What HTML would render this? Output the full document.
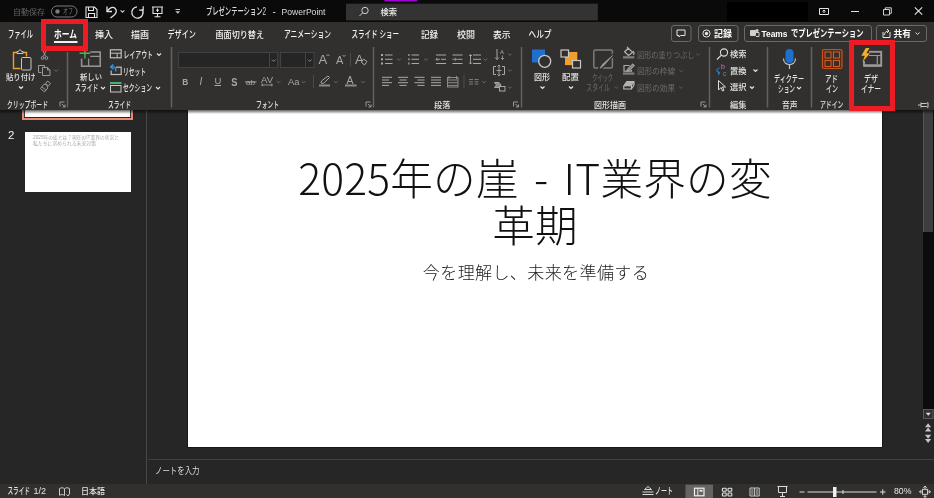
<!DOCTYPE html>
<html lang="ja"><head><meta charset="utf-8"><title>PowerPoint</title>
<style>
html,body{margin:0;padding:0;background:#262626;overflow:hidden}
body{width:934px;height:498px;position:relative;font-family:"Liberation Sans","Noto Sans CJK JP",sans-serif;}
.abs{position:absolute}
#titlebar{left:0;top:0;width:934px;height:23px;background:#0a0a0a}
#ribbon{left:0;top:22.3px;width:934px;height:87.8px;background:#31302e}
#shadow{left:0;top:110px;width:934px;height:3.5px;background:linear-gradient(rgba(0,0,0,.6),rgba(0,0,0,0))}
#work{left:0;top:110px;width:934px;height:374px;background:#262626}
#vdiv{left:146px;top:110px;width:1px;height:374px;background:#484848}
#hdiv{left:148px;top:458.8px;width:786px;height:1.3px;background:#404040}
#slide{left:188.3px;top:110px;width:694.2px;height:336.8px;background:#fff;box-shadow:0 0 0 0.9px #181818}
#thumb1{left:22px;top:100px;width:107px;height:16px;background:#fff;border:2px solid #ea8a72;box-shadow:inset 0 0 0 0.9px #262626}
#thumb2{left:24.6px;top:131.6px;width:106.4px;height:60.2px;background:#fff}
#status{left:0;top:484.4px;width:934px;height:14px;background:#31302e}
#track{left:922.5px;top:110px;width:11px;height:299px;background:#0c0c0c}
#sthumb{left:922.5px;top:110px;width:10px;height:122px;background:#3e3e3e;border-left:1px solid #555;box-sizing:border-box}
#title{will-change:transform;left:188px;top:153.3px;word-spacing:5.5px;width:694px;text-align:center;font-family:"Noto Sans CJK JP","Liberation Sans",sans-serif;font-size:42.67px;line-height:47.4px;font-weight:300;color:#111;white-space:nowrap;letter-spacing:0.2px}
#sub{will-change:transform;left:188.5px;top:258.6px;letter-spacing:0.35px;width:694px;text-align:center;font-family:"Noto Sans CJK JP","Liberation Sans",sans-serif;font-size:17.07px;line-height:26px;font-weight:300;color:#222;white-space:nowrap}
svg{position:absolute;left:0;top:0;will-change:transform}
svg text{font-family:"Liberation Sans","Noto Sans CJK JP",sans-serif;white-space:pre}
</style></head><body>
<div class="abs" id="work"></div>
<div class="abs" id="vdiv"></div>
<div class="abs" id="hdiv"></div>
<div class="abs" id="track"></div>
<div class="abs" id="sthumb"></div>
<div class="abs" id="thumb1"></div>
<div class="abs" id="thumb2"></div>
<div class="abs" id="slide"></div>
<div class="abs" id="title">2025年の崖 - IT業界の変<br>革期</div>
<div class="abs" id="sub">今を理解し、未来を準備する</div>
<div class="abs" id="shadow"></div>
<div class="abs" id="titlebar"></div>
<div class="abs" id="ribbon"></div>
<div class="abs" id="status"></div>
<svg width="934" height="498" viewBox="0 0 934 498">
<text x="13" y="14.76" font-size="8.4" fill="#646464" font-weight="400" textLength="32" lengthAdjust="spacingAndGlyphs">自動保存</text>
<rect x="51.5" y="6" width="25.5" height="11" fill="none" stroke="#7c7c7c" stroke-width="1" rx="5.5"/>
<circle cx="57.5" cy="11.5" r="2.2" fill="#7c7c7c"/>
<text x="63" y="14.43" font-size="7.41" fill="#7c7c7c" font-weight="400" textLength="10" lengthAdjust="spacingAndGlyphs">オフ</text>
<path d="M86 7H94.5L97 9.5V17.5H86ZM88.5 7V10.5H93.5V7M88.5 17.5V13.5H94.5V17.5" stroke="#e4e4e4" stroke-width="1.1" fill="none"/>
<path d="M107 6.5V11.5H112" stroke="#e4e4e4" stroke-width="1.3" fill="none"/>
<path d="M107.3 11.2C109.5 7.5 113 6.5 115 8.3C117.3 10.5 116.3 13.5 114 15.3L110.5 18" stroke="#e4e4e4" stroke-width="1.3" fill="none"/>
<path d="M120.6 10.350000000000001L122.5 12.25L124.4 10.350000000000001" stroke="#c8c8c8" stroke-width="1.2" fill="none"/>
<path d="M142 9.3A5.6 5.6 0 1 1 137 6.9" stroke="#e4e4e4" stroke-width="1.3" fill="none"/>
<path d="M143.2 6.2V10.2H139.2" stroke="#e4e4e4" stroke-width="1.2" fill="none"/>
<path d="M152 7H163M153 7V13.5H162V7M157.5 13.5V16.5M154.5 16.8H160.5" stroke="#e4e4e4" stroke-width="1.1" fill="none"/>
<path d="M157.5 8.5V12M156 10.2H159" stroke="#e4e4e4" stroke-width="1" fill="none"/>
<path d="M175.5 9.5H180" stroke="#c8c8c8" stroke-width="1" fill="none"/>
<path d="M175.3 11.2H180.2L177.75 13.8Z" stroke="none" stroke-width="1" fill="#c8c8c8"/>
<text x="206" y="15.22" font-size="10.03" fill="#dcdcdc" font-weight="500" textLength="60" lengthAdjust="spacingAndGlyphs">プレゼンテーション2</text>
<text x="272.4" y="15.2" font-size="10" fill="#dcdcdc">-</text>
<text x="281.5" y="15.23" font-size="9.8" fill="#dcdcdc" font-weight="400" textLength="44" lengthAdjust="spacingAndGlyphs">PowerPoint</text>
<rect x="346" y="3.7" width="251.8" height="16.7" fill="#333333"/>
<circle cx="365" cy="10.5" r="3.2" fill="none" stroke="#d0d0d0" stroke-width="1"/>
<line x1="362.7" y1="12.8" x2="359.5" y2="16" stroke="#d0d0d0" stroke-width="1"/>
<text x="380.5" y="15.26" font-size="8.4" fill="#f0f0f0" font-weight="500" textLength="16.5" lengthAdjust="spacingAndGlyphs">検索</text>
<rect x="384.4" y="0" width="33" height="1.3" fill="#a800d8"/>
<rect x="727" y="2" width="81" height="19.5" fill="#000"/>
<path d="M819.5 8.5H828.5V14.5H819.5ZM824 10V13M822.5 11.5L824 10L825.5 11.5" stroke="#e4e4e4" stroke-width="1" fill="none"/>
<line x1="851" y1="11.5" x2="859" y2="11.5" stroke="#e4e4e4" stroke-width="1"/>
<path d="M883.5 9.5H889.5V15H883.5ZM885.3 9.5V7.8H891.3V13.3H889.5" stroke="#d0d0d0" stroke-width="1" fill="none"/>
<path d="M914.8 7.3L922.2 14.7M922.2 7.3L914.8 14.7" stroke="#e4e4e4" stroke-width="1.1" fill="none"/>
<text x="8" y="38.14" font-size="9.8" fill="#f4f4f4" font-weight="500" textLength="25" lengthAdjust="spacingAndGlyphs">ファイル</text>
<text x="95" y="37.92" font-size="8.6" fill="#f4f4f4" font-weight="500" textLength="18" lengthAdjust="spacingAndGlyphs">挿入</text>
<text x="131" y="37.92" font-size="8.6" fill="#f4f4f4" font-weight="500" textLength="18" lengthAdjust="spacingAndGlyphs">描画</text>
<text x="167.5" y="38.14" font-size="9.8" fill="#f4f4f4" font-weight="500" textLength="28.5" lengthAdjust="spacingAndGlyphs">デザイン</text>
<text x="215.5" y="37.92" font-size="8.6" fill="#f4f4f4" font-weight="500" textLength="48.5" lengthAdjust="spacingAndGlyphs">画面切り替え</text>
<text x="284" y="38.14" font-size="9.8" fill="#f4f4f4" font-weight="500" textLength="47" lengthAdjust="spacingAndGlyphs">アニメーション</text>
<text x="351.5" y="38.14" font-size="9.8" fill="#f4f4f4" font-weight="500" textLength="47.5" lengthAdjust="spacingAndGlyphs">スライド ショー</text>
<text x="421" y="37.92" font-size="8.6" fill="#f4f4f4" font-weight="500" textLength="17" lengthAdjust="spacingAndGlyphs">記録</text>
<text x="457" y="37.92" font-size="8.6" fill="#f4f4f4" font-weight="500" textLength="18" lengthAdjust="spacingAndGlyphs">校閲</text>
<text x="493" y="37.92" font-size="8.6" fill="#f4f4f4" font-weight="500" textLength="17.5" lengthAdjust="spacingAndGlyphs">表示</text>
<text x="528.5" y="38.14" font-size="9.8" fill="#f4f4f4" font-weight="500" textLength="23" lengthAdjust="spacingAndGlyphs">ヘルプ</text>
<text x="54" y="38.14" font-size="9.8" fill="#ffffff" font-weight="700" textLength="23" lengthAdjust="spacingAndGlyphs">ホーム</text>
<rect x="54" y="41" width="23.5" height="2" fill="#f0f0f0"/>
<rect x="671.5" y="25.5" width="19.5" height="16" fill="#31302e" stroke="#6a6a6a" stroke-width="1" rx="2.5"/>
<rect x="698.5" y="25.5" width="39.5" height="16" fill="#31302e" stroke="#6a6a6a" stroke-width="1" rx="2.5"/>
<rect x="744.5" y="25.5" width="127" height="16" fill="#31302e" stroke="#6a6a6a" stroke-width="1" rx="2.5"/>
<rect x="876.5" y="25.5" width="50" height="16" fill="#31302e" stroke="#6a6a6a" stroke-width="1" rx="2.5"/>
<path d="M677 30H685V35.5H680.5L679 37V35.5H677Z" stroke="#e4e4e4" stroke-width="1" fill="none"/>
<circle cx="706.5" cy="33.5" r="3.6" fill="none" stroke="#e4e4e4" stroke-width="1"/><circle cx="706.5" cy="33.5" r="1.7" fill="#e4e4e4"/>
<text x="714" y="37.12" font-size="8.6" fill="#fff" font-weight="700" textLength="18" lengthAdjust="spacingAndGlyphs">記録</text>
<rect x="750" y="30" width="6" height="6" fill="#d0d0d0" rx="1"/>
<circle cx="757" cy="30.5" r="1.6" fill="#d0d0d0"/>
<path d="M756 32.5H759V36.5H756" stroke="#d0d0d0" stroke-width="1" fill="none"/>
<text x="761.5" y="37.29" font-size="8.8" fill="#fff" font-weight="700" textLength="26" lengthAdjust="spacingAndGlyphs">Teams</text>
<text x="791" y="37.34" font-size="9.8" fill="#fff" font-weight="700" textLength="72.5" lengthAdjust="spacingAndGlyphs">でプレゼンテーション</text>
<path d="M883 32V37.5H890V32" stroke="#e4e4e4" stroke-width="1" fill="none"/>
<path d="M884.5 35C884.5 32.5 886 31 888.5 31M887 29L889 31L887 33" stroke="#e4e4e4" stroke-width="1" fill="none"/>
<text x="893.5" y="37.12" font-size="8.6" fill="#fff" font-weight="700" textLength="17.5" lengthAdjust="spacingAndGlyphs">共有</text>
<path d="M915.5 32.5L917.5 34.5L919.5 32.5" stroke="#e4e4e4" stroke-width="1" fill="none"/>
<line x1="67.5" y1="52" x2="67.5" y2="107.5" stroke="#626262" stroke-width="1.5"/>
<line x1="171.5" y1="47" x2="171.5" y2="107.5" stroke="#626262" stroke-width="1.5"/>
<line x1="373.5" y1="47" x2="373.5" y2="107.5" stroke="#626262" stroke-width="1.5"/>
<line x1="521.5" y1="47" x2="521.5" y2="107.5" stroke="#626262" stroke-width="1.5"/>
<line x1="709.5" y1="47" x2="709.5" y2="107.5" stroke="#626262" stroke-width="1.5"/>
<line x1="767.5" y1="47" x2="767.5" y2="107.5" stroke="#626262" stroke-width="1.5"/>
<line x1="811.5" y1="47" x2="811.5" y2="107.5" stroke="#626262" stroke-width="1.5"/>
<text x="7" y="108.10" font-size="9.12" fill="#e4e4e4" font-weight="500" textLength="41" lengthAdjust="spacingAndGlyphs">クリップボード</text>
<text x="108" y="108.10" font-size="9.12" fill="#e4e4e4" font-weight="500" textLength="23" lengthAdjust="spacingAndGlyphs">スライド</text>
<text x="256" y="108.10" font-size="9.12" fill="#e4e4e4" font-weight="500" textLength="23" lengthAdjust="spacingAndGlyphs">フォント</text>
<text x="434" y="107.92" font-size="8" fill="#e4e4e4" font-weight="500" textLength="16.5" lengthAdjust="spacingAndGlyphs">段落</text>
<text x="594" y="107.92" font-size="8" fill="#e4e4e4" font-weight="500" textLength="32" lengthAdjust="spacingAndGlyphs">図形描画</text>
<text x="730" y="107.92" font-size="8" fill="#e4e4e4" font-weight="500" textLength="16.5" lengthAdjust="spacingAndGlyphs">編集</text>
<text x="782" y="107.92" font-size="8" fill="#e4e4e4" font-weight="500" textLength="15.5" lengthAdjust="spacingAndGlyphs">音声</text>
<text x="820" y="108.10" font-size="9.12" fill="#e4e4e4" font-weight="500" textLength="23.5" lengthAdjust="spacingAndGlyphs">アドイン</text>
<path d="M60 106.5V102H64.5" stroke="#9a9a9a" stroke-width="1" fill="none"/>
<path d="M62 104L65 107M65 104.5V107H62.5" stroke="#9a9a9a" stroke-width="1" fill="none"/>
<path d="M366 106.5V102H370.5" stroke="#9a9a9a" stroke-width="1" fill="none"/>
<path d="M368 104L371 107M371 104.5V107H368.5" stroke="#9a9a9a" stroke-width="1" fill="none"/>
<path d="M513.5 106.5V102H518.0" stroke="#9a9a9a" stroke-width="1" fill="none"/>
<path d="M515.5 104L518.5 107M518.5 104.5V107H516.0" stroke="#9a9a9a" stroke-width="1" fill="none"/>
<path d="M701 106.5V102H705.5" stroke="#9a9a9a" stroke-width="1" fill="none"/>
<path d="M703 104L706 107M706 104.5V107H703.5" stroke="#9a9a9a" stroke-width="1" fill="none"/>
<path d="M17 52.5H13.5V68.5H20.5M23 52.5H26.5V56.5" stroke="#f0a030" stroke-width="1.4" fill="none"/>
<path d="M17 53.5V51.5H18.5C18.5 49.5 21.5 49.5 21.5 51.5H23V53.5Z" stroke="#c8c8c8" stroke-width="1" fill="#31302e"/>
<rect x="21.5" y="57.5" width="9.5" height="12.5" fill="#31302e" stroke="#c8c8c8" stroke-width="1" rx="1"/>
<text x="6" y="80.37" font-size="8.3" fill="#e4e4e4" font-weight="500" textLength="29.5" lengthAdjust="spacingAndGlyphs">貼り付け</text>
<path d="M19 86.5L21 88.5L23 86.5" stroke="#e4e4e4" stroke-width="1.2" fill="none"/>
<path d="M42 49L45.8 56.5M47 49L43.2 56.5" stroke="#9a9a9a" stroke-width="1" fill="none"/>
<circle cx="42.6" cy="58" r="1.4" fill="none" stroke="#9a9a9a"/><circle cx="46.4" cy="58" r="1.4" fill="none" stroke="#9a9a9a"/>
<path d="M41.5 72.5H38.5V65.5H44.5V67" stroke="#9a9a9a" stroke-width="1" fill="none"/>
<path d="M42.5 67.5H47.5L50 70V75.5H42.5ZM47.5 67.5V70H50" stroke="#9a9a9a" stroke-width="1" fill="none"/>
<path d="M54 69.5L56 71.5L58 69.5" stroke="#6a6a6a" stroke-width="1" fill="none"/>
<path d="M47.5 81L50.5 83.5L48.5 86L45.5 83.5ZM46.5 84.5L44 84.2L40.5 88.5L44.5 92L47.8 88L46.5 84.5M42 87L46 90.2" stroke="#9a9a9a" stroke-width="1" fill="none"/>
<rect x="81.6" y="52" width="18.6" height="14.2" fill="none" stroke="#929292" stroke-width="1.6"/>
<path d="M88.6 56.3H100M88.6 56.3V66" stroke="#929292" stroke-width="1.3" fill="none"/>
<rect x="79" y="49" width="11.3" height="9.6" fill="#31302e"/>
<path d="M84.9 47.5V58.5M79.6 53.3H90.2" stroke="#44b860" stroke-width="1.4" fill="none"/>
<text x="80" y="80.37" font-size="8.3" fill="#e4e4e4" font-weight="500" textLength="22" lengthAdjust="spacingAndGlyphs">新しい</text>
<text x="75" y="91.07" font-size="9.46" fill="#e4e4e4" font-weight="500" textLength="23.5" lengthAdjust="spacingAndGlyphs">スライド</text>
<path d="M101 87.0L103 89.0L105 87.0" stroke="#e4e4e4" stroke-width="1.1" fill="none"/>
<rect x="110.4" y="49.8" width="10.8" height="8" fill="none" stroke="#c0c0c0" stroke-width="1.2"/>
<path d="M110.4 53.2H121.2M117.2 53.2V57.8" stroke="#c0c0c0" stroke-width="1" fill="none"/>
<text x="123.5" y="57.57" font-size="9.46" fill="#e4e4e4" font-weight="500" textLength="29.5" lengthAdjust="spacingAndGlyphs">レイアウト</text>
<path d="M157 53.5L159 55.5L161 53.5" stroke="#e4e4e4" stroke-width="1.1" fill="none"/>
<rect x="111.2" y="67.2" width="10" height="7.3" fill="none" stroke="#c0c0c0" stroke-width="1.2"/>
<rect x="109" y="63.5" width="7" height="7" fill="#31302e"/>
<path d="M115.8 71.3C116.4 67.8 114.3 66.2 111.2 66.8M113.3 64.4L110.6 67L113.5 69.3" stroke="#3a96dd" stroke-width="1.4" fill="none"/>
<text x="123" y="74.57" font-size="9.46" fill="#e4e4e4" font-weight="500" textLength="23" lengthAdjust="spacingAndGlyphs">リセット</text>
<rect x="110" y="82" width="11.5" height="2" fill="#4caf6a"/>
<rect x="110.5" y="85.5" width="10.5" height="6.5" fill="none" stroke="#c8c8c8" stroke-width="1"/>
<text x="123" y="91.07" font-size="9.46" fill="#e4e4e4" font-weight="500" textLength="29" lengthAdjust="spacingAndGlyphs">セクション</text>
<path d="M156 87.0L158 89.0L160 87.0" stroke="#e4e4e4" stroke-width="1.1" fill="none"/>
<rect x="178.5" y="52.5" width="99" height="15" fill="#252525" stroke="#424242" stroke-width="1"/>
<line x1="269.5" y1="53" x2="269.5" y2="67" stroke="#424242" stroke-width="1"/>
<path d="M271.9 59.6L273.7 61.4L275.5 59.6" stroke="#8a8a8a" stroke-width="1" fill="none"/>
<rect x="280.5" y="52.5" width="33.5" height="15" fill="#252525" stroke="#424242" stroke-width="1"/>
<line x1="305.5" y1="53" x2="305.5" y2="67" stroke="#424242" stroke-width="1"/>
<path d="M307.9 59.6L309.7 61.4L311.5 59.6" stroke="#8a8a8a" stroke-width="1" fill="none"/>
<text x="318.5" y="63.5" font-size="13" fill="#a8a8a8">A</text>
<path d="M326.5 56L328 54.5L329.5 56" stroke="#a8a8a8" stroke-width="0.9" fill="none"/>
<text x="336" y="63.5" font-size="11" fill="#a8a8a8">A</text>
<path d="M342.5 55L344 56.5L345.5 55" stroke="#a8a8a8" stroke-width="0.9" fill="none"/>
<line x1="350.5" y1="53" x2="350.5" y2="66" stroke="#4c4c4c" stroke-width="1"/>
<text x="355" y="63.5" font-size="13" fill="#a8a8a8">A</text>
<path d="M363.5 59L367 61.5L364.5 65L361.5 62.5Z" stroke="#a8a8a8" stroke-width="1" fill="#31302e"/>
<text x="182.2" y="84.8" font-size="9.6" font-weight="700" fill="#a8a8a8" textLength="6" lengthAdjust="spacingAndGlyphs">B</text>
<text x="199.5" y="84.8" font-size="10" font-style="italic" fill="#a8a8a8" font-family="Liberation Serif,serif">I</text>
<text x="214.5" y="84" font-size="9.5" fill="#a8a8a8">U</text>
<line x1="214.5" y1="85.5" x2="221" y2="85.5" stroke="#a8a8a8" stroke-width="1"/>
<text x="231.2" y="86" font-size="10.8" font-weight="700" fill="#a8a8a8" textLength="6.2" lengthAdjust="spacingAndGlyphs">S</text>
<text x="246" y="84.5" font-size="7.5" fill="#a8a8a8" textLength="9" lengthAdjust="spacingAndGlyphs">ab</text>
<line x1="245" y1="82" x2="256.5" y2="82" stroke="#a8a8a8" stroke-width="1"/>
<text x="261" y="82.5" font-size="8.5" fill="#a8a8a8" textLength="12" lengthAdjust="spacingAndGlyphs">AV</text>
<path d="M261.5 85H272.5M263 83.8L261.5 85L263 86.2M271 83.8L272.5 85L271 86.2" stroke="#a8a8a8" stroke-width="0.8" fill="none"/>
<path d="M276.7 81.1L278.5 82.9L280.3 81.1" stroke="#6a6a6a" stroke-width="1" fill="none"/>
<text x="288" y="85" font-size="9.5" fill="#a8a8a8" textLength="11.5" lengthAdjust="spacingAndGlyphs">Aa</text>
<path d="M301.7 81.1L303.5 82.9L305.3 81.1" stroke="#6a6a6a" stroke-width="1" fill="none"/>
<line x1="313.5" y1="75" x2="313.5" y2="88" stroke="#4c4c4c" stroke-width="1"/>
<path d="M321 83L323.5 83.5L329.5 77.5L328 76L321.5 81Z" stroke="#a8a8a8" stroke-width="1" fill="none"/>
<rect x="319" y="84.5" width="11" height="2" fill="#8a8a8a"/>
<path d="M334.2 81.1L336 82.9L337.8 81.1" stroke="#6a6a6a" stroke-width="1" fill="none"/>
<text x="346.5" y="83.5" font-size="10.5" fill="#a8a8a8">A</text>
<rect x="345" y="84.5" width="11.5" height="2" fill="#8a8a8a"/>
<path d="M361.2 81.1L363 82.9L364.8 81.1" stroke="#6a6a6a" stroke-width="1" fill="none"/>
<rect x="381" y="54" width="2" height="2" fill="#a8a8a8"/>
<line x1="385" y1="55" x2="392.5" y2="55" stroke="#a8a8a8" stroke-width="1"/>
<rect x="381" y="58.3" width="2" height="2" fill="#a8a8a8"/>
<line x1="385" y1="59.3" x2="392.5" y2="59.3" stroke="#a8a8a8" stroke-width="1"/>
<rect x="381" y="62.5" width="2" height="2" fill="#a8a8a8"/>
<line x1="385" y1="63.5" x2="392.5" y2="63.5" stroke="#a8a8a8" stroke-width="1"/>
<path d="M397.2 58.6L399 60.4L400.8 58.6" stroke="#6a6a6a" stroke-width="1" fill="none"/>
<rect x="408.3" y="54" width="1.2" height="2" fill="#a8a8a8"/>
<line x1="411.5" y1="55" x2="419" y2="55" stroke="#a8a8a8" stroke-width="1"/>
<rect x="408.3" y="58.3" width="1.2" height="2" fill="#a8a8a8"/>
<line x1="411.5" y1="59.3" x2="419" y2="59.3" stroke="#a8a8a8" stroke-width="1"/>
<rect x="408.3" y="62.5" width="1.2" height="2" fill="#a8a8a8"/>
<line x1="411.5" y1="63.5" x2="419" y2="63.5" stroke="#a8a8a8" stroke-width="1"/>
<path d="M424.2 58.6L426 60.4L427.8 58.6" stroke="#6a6a6a" stroke-width="1" fill="none"/>
<line x1="436" y1="55" x2="446" y2="55" stroke="#a8a8a8" stroke-width="1"/>
<line x1="441" y1="59.3" x2="446" y2="59.3" stroke="#a8a8a8" stroke-width="1"/>
<line x1="436" y1="63.5" x2="446" y2="63.5" stroke="#a8a8a8" stroke-width="1"/>
<path d="M436 59.3H440M437.5 57.8L436 59.3L437.5 60.8" stroke="#a8a8a8" stroke-width="0.9" fill="none"/>
<line x1="452.5" y1="55" x2="462.5" y2="55" stroke="#a8a8a8" stroke-width="1"/>
<line x1="457.5" y1="59.3" x2="462.5" y2="59.3" stroke="#a8a8a8" stroke-width="1"/>
<line x1="452.5" y1="63.5" x2="462.5" y2="63.5" stroke="#a8a8a8" stroke-width="1"/>
<path d="M452.5 59.3H456.5M455 57.8L456.5 59.3L455 60.8" stroke="#a8a8a8" stroke-width="0.9" fill="none"/>
<line x1="473" y1="55" x2="481" y2="55" stroke="#a8a8a8" stroke-width="1"/>
<line x1="473" y1="59.3" x2="481" y2="59.3" stroke="#a8a8a8" stroke-width="1"/>
<line x1="473" y1="63.5" x2="481" y2="63.5" stroke="#a8a8a8" stroke-width="1"/>
<path d="M470.5 54.5V64M469 56L470.5 54.5L472 56M469 62.5L470.5 64L472 62.5" stroke="#a8a8a8" stroke-width="0.9" fill="none"/>
<path d="M483.7 58.6L485.5 60.4L487.3 58.6" stroke="#6a6a6a" stroke-width="1" fill="none"/>
<line x1="382" y1="77.3" x2="392" y2="77.3" stroke="#a8a8a8" stroke-width="1"/>
<line x1="382" y1="80" x2="389" y2="80" stroke="#a8a8a8" stroke-width="1"/>
<line x1="382" y1="82.7" x2="392" y2="82.7" stroke="#a8a8a8" stroke-width="1"/>
<line x1="382" y1="85.4" x2="389" y2="85.4" stroke="#a8a8a8" stroke-width="1"/>
<line x1="398" y1="77.3" x2="408" y2="77.3" stroke="#a8a8a8" stroke-width="1"/>
<line x1="399.5" y1="80" x2="406.5" y2="80" stroke="#a8a8a8" stroke-width="1"/>
<line x1="398" y1="82.7" x2="408" y2="82.7" stroke="#a8a8a8" stroke-width="1"/>
<line x1="399.5" y1="85.4" x2="406.5" y2="85.4" stroke="#a8a8a8" stroke-width="1"/>
<line x1="414.5" y1="77.3" x2="424.5" y2="77.3" stroke="#a8a8a8" stroke-width="1"/>
<line x1="417.5" y1="80" x2="424.5" y2="80" stroke="#a8a8a8" stroke-width="1"/>
<line x1="414.5" y1="82.7" x2="424.5" y2="82.7" stroke="#a8a8a8" stroke-width="1"/>
<line x1="417.5" y1="85.4" x2="424.5" y2="85.4" stroke="#a8a8a8" stroke-width="1"/>
<line x1="431" y1="77.3" x2="441" y2="77.3" stroke="#a8a8a8" stroke-width="1"/>
<line x1="431" y1="80" x2="441" y2="80" stroke="#a8a8a8" stroke-width="1"/>
<line x1="431" y1="82.7" x2="441" y2="82.7" stroke="#a8a8a8" stroke-width="1"/>
<line x1="431" y1="85.4" x2="441" y2="85.4" stroke="#a8a8a8" stroke-width="1"/>
<rect x="447.5" y="77.5" width="10.5" height="9.5" fill="none" stroke="#8a8a8a" stroke-width="1"/>
<line x1="447.5" y1="80" x2="458.0" y2="80" stroke="#8a8a8a" stroke-width="1"/>
<line x1="447.5" y1="82.7" x2="458.0" y2="82.7" stroke="#8a8a8a" stroke-width="1"/>
<line x1="447.5" y1="85.4" x2="458.0" y2="85.4" stroke="#8a8a8a" stroke-width="1"/>
<path d="M449 76V79M456.5 76V79" stroke="#8a8a8a" stroke-width="1" fill="none"/>
<line x1="464" y1="75" x2="464" y2="88" stroke="#4c4c4c" stroke-width="1"/>
<line x1="469" y1="79.5" x2="473" y2="79.5" stroke="#7a7a7a" stroke-width="1"/>
<line x1="474.5" y1="79.5" x2="478.5" y2="79.5" stroke="#7a7a7a" stroke-width="1"/>
<line x1="469" y1="81.8" x2="473" y2="81.8" stroke="#7a7a7a" stroke-width="1"/>
<line x1="474.5" y1="81.8" x2="478.5" y2="81.8" stroke="#7a7a7a" stroke-width="1"/>
<line x1="469" y1="84" x2="473" y2="84" stroke="#7a7a7a" stroke-width="1"/>
<line x1="474.5" y1="84" x2="478.5" y2="84" stroke="#7a7a7a" stroke-width="1"/>
<path d="M482.2 81.1L484 82.9L485.8 81.1" stroke="#6a6a6a" stroke-width="1" fill="none"/>
<path d="M497 49V59.5M495 57.5L497 59.5L499 57.5" stroke="#a8a8a8" stroke-width="1" fill="none"/>
<text x="500" y="54" font-size="6" fill="#a8a8a8">A</text>
<path d="M502.5 55.5V59.5M501 58L502.5 59.5L504 58" stroke="#a8a8a8" stroke-width="0.8" fill="none"/>
<path d="M508.2 53.6L510 55.4L511.8 53.6" stroke="#6a6a6a" stroke-width="1" fill="none"/>
<path d="M496 66.5H493.5V74.5H496M502 66.5H504.5V74.5H502" stroke="#a8a8a8" stroke-width="1" fill="none"/>
<path d="M499 65V76M497.5 66.5L499 65L500.5 66.5M497.5 74.5L499 76L500.5 74.5M496.5 70.5H501.5" stroke="#a8a8a8" stroke-width="0.9" fill="none"/>
<path d="M508.2 69.6L510 71.4L511.8 69.6" stroke="#6a6a6a" stroke-width="1" fill="none"/>
<path d="M494.5 82.5H499L501 85L499 87.5H494.5L496.5 85Z" stroke="#a8a8a8" stroke-width="1" fill="#8a8a8a"/>
<rect x="499.5" y="86.5" width="5.5" height="4.5" fill="#31302e" stroke="#a8a8a8" stroke-width="1"/>
<path d="M508.2 86.6L510 88.4L511.8 86.6" stroke="#6a6a6a" stroke-width="1" fill="none"/>
<rect x="532" y="49.5" width="13" height="13" fill="#1e6fd0"/>
<circle cx="544.7" cy="61.3" r="6" fill="#31302e" stroke="#c8c8c8" stroke-width="1.3"/>
<text x="534" y="80.37" font-size="8.3" fill="#e4e4e4" font-weight="500" textLength="16" lengthAdjust="spacingAndGlyphs">図形</text>
<path d="M540.5 86.5L542.5 88.5L544.5 86.5" stroke="#e4e4e4" stroke-width="1.2" fill="none"/>
<rect x="568" y="52" width="9.3" height="9.3" fill="#eea02e"/>
<rect x="565" y="55.8" width="9.3" height="9.3" fill="#eea02e"/>
<rect x="561" y="50" width="7.5" height="7" fill="#31302e" stroke="#c8c8c8" stroke-width="1.2"/>
<rect x="572.5" y="60.5" width="8" height="7.5" fill="#31302e" stroke="#c8c8c8" stroke-width="1.2"/>
<text x="562" y="80.37" font-size="8.3" fill="#e4e4e4" font-weight="500" textLength="17" lengthAdjust="spacingAndGlyphs">配置</text>
<path d="M569 86.5L571 88.5L573 86.5" stroke="#e4e4e4" stroke-width="1.2" fill="none"/>
<rect x="593.8" y="49.9" width="18.6" height="18.2" fill="none" stroke="#7c7c7c" stroke-width="1.5" rx="1.5"/>
<path d="M614.2 55.2L605 65.5L600.8 69.3L598.6 68.3L602.3 63.2L612.6 54.2Z" stroke="#31302e" stroke-width="1.2" fill="#9a9a9a"/>
<text x="592" y="81.48" font-size="9.35" fill="#6c6c6c" font-weight="400" textLength="21" lengthAdjust="spacingAndGlyphs">クイック</text>
<text x="586.3" y="91.28" font-size="9.35" fill="#6c6c6c" font-weight="400" textLength="23.5" lengthAdjust="spacingAndGlyphs">スタイル</text>
<path d="M614.4000000000001 86.6L616.2 88.4L618.0 86.6" stroke="#5a5a5a" stroke-width="1" fill="none"/>
<path d="M628.3 48.2L632.6 52.4L628.4 55.4L624.6 51.8ZM628.3 48.2L627 46.9" stroke="#b4b4b4" stroke-width="1.2" fill="none"/>
<path d="M632.9 50.8C634.4 52.6 634.3 54 633.4 54.8" stroke="#b4b4b4" stroke-width="1.1" fill="none"/>
<rect x="623" y="56.2" width="11.3" height="2.3" fill="#7c7c7c"/>
<text x="637" y="57.59" font-size="8.2" fill="#6c6c6c" font-weight="400" textLength="57.5" lengthAdjust="spacingAndGlyphs">図形の塗りつぶし</text>
<path d="M696.2 53.6L698 55.4L699.8 53.6" stroke="#5a5a5a" stroke-width="1" fill="none"/>
<path d="M629.5 65.5H624V71.2H631.5V69.8" stroke="#a8a8a8" stroke-width="1.2" fill="none"/>
<path d="M626.8 71.4L627.6 68.8L632.8 63.8L634.6 65.6L629.4 70.7Z" stroke="#b4b4b4" stroke-width="0.8" fill="#8a8a8a"/>
<rect x="623" y="72.4" width="11.3" height="2.3" fill="#7c7c7c"/>
<text x="637" y="74.49" font-size="8.2" fill="#6c6c6c" font-weight="400" textLength="38" lengthAdjust="spacingAndGlyphs">図形の枠線</text>
<path d="M679.2 70.1L681 71.9L682.8 70.1" stroke="#5a5a5a" stroke-width="1" fill="none"/>
<path d="M626.6 81.6H634L631.4 85.8H623.8Z" stroke="#c0c0c0" stroke-width="1" fill="#b0b0b0"/>
<path d="M623.8 85.8V89H631.4V85.8M631.4 89L634 85V81.6" stroke="#c0c0c0" stroke-width="1.1" fill="none"/>
<text x="637" y="90.99" font-size="8.2" fill="#6c6c6c" font-weight="400" textLength="38" lengthAdjust="spacingAndGlyphs">図形の効果</text>
<path d="M679.2 86.6L681 88.4L682.8 86.6" stroke="#5a5a5a" stroke-width="1" fill="none"/>
<circle cx="724" cy="52.5" r="3.6" fill="none" stroke="#dcdcdc" stroke-width="1.1"/>
<line x1="721.3" y1="55.2" x2="717" y2="59.5" stroke="#dcdcdc" stroke-width="1.2"/>
<text x="730" y="57.37" font-size="8.3" fill="#e4e4e4" font-weight="500" textLength="16.5" lengthAdjust="spacingAndGlyphs">検索</text>
<text x="721" y="69" font-size="7" fill="#d070d0">b</text><text x="723" y="75.5" font-size="7" fill="#3a96dd">c</text>
<path d="M719.5 68C716 68.5 716 72.5 719.5 73M718 71.5L719.8 73.2L718 74.8" stroke="#3a96dd" stroke-width="1" fill="none"/>
<text x="730" y="73.87" font-size="8.3" fill="#e4e4e4" font-weight="500" textLength="16.5" lengthAdjust="spacingAndGlyphs">置換</text>
<path d="M753.5 69.5L755.5 71.5L757.5 69.5" stroke="#e4e4e4" stroke-width="1.1" fill="none"/>
<path d="M718.5 80.5V90L721 87.5L722.5 91L724 90.3L722.5 87H725.5Z" stroke="#dcdcdc" stroke-width="1" fill="none"/>
<text x="730" y="90.37" font-size="8.3" fill="#e4e4e4" font-weight="500" textLength="16.5" lengthAdjust="spacingAndGlyphs">選択</text>
<path d="M750 86.5L752 88.5L754 86.5" stroke="#e4e4e4" stroke-width="1.1" fill="none"/>
<rect x="785.5" y="49" width="8" height="14" fill="#1e6fd0" rx="4"/>
<path d="M783.5 58.5C783.5 66.5 795.5 66.5 795.5 58.5M789.5 64.5V69" stroke="#c8c8c8" stroke-width="1.2" fill="none"/>
<text x="774" y="81.57" font-size="9.46" fill="#e4e4e4" font-weight="500" textLength="30" lengthAdjust="spacingAndGlyphs">ディクテー</text>
<text x="778" y="91.57" font-size="9.46" fill="#e4e4e4" font-weight="500" textLength="17" lengthAdjust="spacingAndGlyphs">ション</text>
<path d="M797 87.0L799 89.0L801 87.0" stroke="#e4e4e4" stroke-width="1.1" fill="none"/>
<rect x="822.5" y="49.5" width="19.5" height="19" fill="#5a2a16" stroke="#c8521e" stroke-width="1.2" rx="1.5"/>
<rect x="825" y="52" width="6" height="6" fill="#31302e" stroke="#e8641e" stroke-width="0.9"/>
<rect x="833.5" y="52" width="6" height="6" fill="#31302e" stroke="#e8641e" stroke-width="0.9"/>
<rect x="825" y="60.5" width="6" height="6" fill="#31302e" stroke="#e8641e" stroke-width="0.9"/>
<rect x="833.5" y="60.5" width="6" height="6" fill="#31302e" stroke="#e8641e" stroke-width="0.9"/>
<text x="825" y="81.57" font-size="9.46" fill="#e4e4e4" font-weight="500" textLength="13" lengthAdjust="spacingAndGlyphs">アド</text>
<text x="826" y="91.57" font-size="9.46" fill="#e4e4e4" font-weight="500" textLength="12" lengthAdjust="spacingAndGlyphs">イン</text>
<rect x="864" y="51.8" width="17.2" height="14" fill="none" stroke="#9a9a9a" stroke-width="1.9"/>
<path d="M869 55.5H881M877.3 55.5V64" stroke="#9a9a9a" stroke-width="1.2" fill="none"/>
<line x1="864" y1="65.4" x2="881.2" y2="65.4" stroke="#9a9a9a" stroke-width="2.2"/>
<rect x="860.5" y="49" width="8.5" height="12" fill="#31302e"/>
<path d="M865.8 48L861.3 55.8H864.8L862.3 62.3L870 53.3H866.4L869.5 48Z" stroke="none" stroke-width="1" fill="#f6ae2d"/>
<text x="864" y="81.57" font-size="9.46" fill="#e4e4e4" font-weight="500" textLength="14" lengthAdjust="spacingAndGlyphs">デザ</text>
<text x="861" y="91.57" font-size="9.46" fill="#e4e4e4" font-weight="500" textLength="20" lengthAdjust="spacingAndGlyphs">イナー</text>
<path d="M918 105H921M921 102.5V107.5M921 103.5H926.5L928 102.5V107.5L926.5 106.5H921" stroke="#c8c8c8" stroke-width="1" fill="none"/>
<rect x="43.5" y="21.5" width="42" height="27" fill="none" stroke="#ed1c24" stroke-width="5"/>
<rect x="851.5" y="42.5" width="41" height="66" fill="none" stroke="#ed1c24" stroke-width="5"/>
<text x="7.5" y="494.07" font-size="9.46" fill="#e4e4e4" font-weight="500" textLength="22.5" lengthAdjust="spacingAndGlyphs">スライド</text>
<text x="33.5" y="493.87" font-size="8.3" fill="#e4e4e4" font-weight="500" textLength="12.5" lengthAdjust="spacingAndGlyphs">1/2</text>
<path d="M59.5 488.5C61.5 487.5 63 487.5 64.5 488.8V495.5C63 494.3 61.5 494.3 59.5 495.2ZM64.5 488.8C66 487.5 67.5 487.5 69.5 488.5V493M66.5 494.5L68 496L70 493" stroke="#dcdcdc" stroke-width="0.9" fill="none"/>
<text x="81" y="493.87" font-size="8.3" fill="#e4e4e4" font-weight="500" textLength="24" lengthAdjust="spacingAndGlyphs">日本語</text>
<path d="M642.5 494.5H653.5M642.5 492H653.5M644.5 489.5L648 486.5L651.5 489.5Z" stroke="#dcdcdc" stroke-width="1" fill="none"/>
<text x="655" y="494.07" font-size="9.46" fill="#e4e4e4" font-weight="500" textLength="18" lengthAdjust="spacingAndGlyphs">ノート</text>
<rect x="685.5" y="484.6" width="27.5" height="14" fill="#666462"/>
<rect x="694.5" y="488.2" width="9.5" height="7.6" fill="none" stroke="#f0f0f0" stroke-width="1.2"/>
<line x1="697.8" y1="488.2" x2="697.8" y2="495.8" stroke="#f0f0f0" stroke-width="0.9"/>
<rect x="699.5" y="489.8" width="3" height="1.8" fill="#f0f0f0"/>
<rect x="722.4" y="488.2" width="3.8" height="3" fill="none" stroke="#e4e4e4" stroke-width="1.1" rx="0.8"/>
<rect x="728" y="488.2" width="3.8" height="3" fill="none" stroke="#e4e4e4" stroke-width="1.1" rx="0.8"/>
<rect x="722.4" y="493" width="3.8" height="3" fill="none" stroke="#e4e4e4" stroke-width="1.1" rx="0.8"/>
<rect x="728" y="493" width="3.8" height="3" fill="none" stroke="#e4e4e4" stroke-width="1.1" rx="0.8"/>
<path d="M750 488H754.6V496H750ZM754.6 488H759.2V496H754.6M751.2 490H753.4M751.2 492H753.4M751.2 494H753.4M755.8 490H758M755.8 492H758M755.8 494H758" stroke="#dcdcdc" stroke-width="0.9" fill="none"/>
<path d="M777.5 486.5H787.5M778.5 486.5V492.5H786.5V486.5M782.5 492.5V496M780 496.5H785" stroke="#dcdcdc" stroke-width="1" fill="none"/>
<line x1="799.5" y1="492" x2="804.5" y2="492" stroke="#dcdcdc" stroke-width="1"/>
<line x1="807.5" y1="492" x2="876.5" y2="492" stroke="#dcdcdc" stroke-width="1"/>
<line x1="843" y1="490" x2="843" y2="494" stroke="#dcdcdc" stroke-width="1"/>
<rect x="833" y="487" width="3.5" height="10" fill="#f0f0f0"/>
<path d="M880 492H885.5M882.75 489.3V494.7" stroke="#dcdcdc" stroke-width="1" fill="none"/>
<text x="894" y="493.87" font-size="8.3" fill="#e4e4e4" font-weight="500" textLength="17.5" lengthAdjust="spacingAndGlyphs">80%</text>
<path d="M925 486V497.5M919.5 491.8H930.5M923.3 487.8L925 486L926.7 487.8M923.3 495.8L925 497.5L926.7 495.8M921.3 490L919.5 491.8L921.3 493.5M928.7 490L930.5 491.8L928.7 493.5" stroke="#dcdcdc" stroke-width="0.9" fill="none"/>
<rect x="922.5" y="489.3" width="5" height="5" fill="#31302e" stroke="#dcdcdc" stroke-width="0.9"/>
<text x="155" y="474.23" font-size="9.2" fill="#dcdcdc" font-weight="400" textLength="44.5" lengthAdjust="spacingAndGlyphs">ノートを入力</text>
<text x="8" y="139" font-size="11.5" fill="#f4f4f4">2</text>
<text x="33" y="139.2" font-size="4.6" fill="#a8a8a8" textLength="86" lengthAdjust="spacingAndGlyphs">2025年の崖とは？現在のIT業界の状況と</text>
<text x="33" y="144.8" font-size="4.6" fill="#a8a8a8" textLength="63" lengthAdjust="spacingAndGlyphs">私たちに求められる未来対策</text>
<rect x="923.5" y="409.5" width="9.5" height="9" fill="#31302e" stroke="#5a5a5a" stroke-width="1"/>
<path d="M925.8 412.8H930.8L928.3 415.8Z" stroke="none" stroke-width="1" fill="#e0e0e0"/>
<path d="M925 427.3L928.1 423.3L931.2 427.3ZM925 431.5L928.1 427.5L931.2 431.5Z" stroke="none" stroke-width="1" fill="#c4c4c4"/>
<path d="M925 434.8L928.1 438.8L931.2 434.8ZM925 439L928.1 443L931.2 439Z" stroke="none" stroke-width="1" fill="#c4c4c4"/>
</svg>
</body></html>
